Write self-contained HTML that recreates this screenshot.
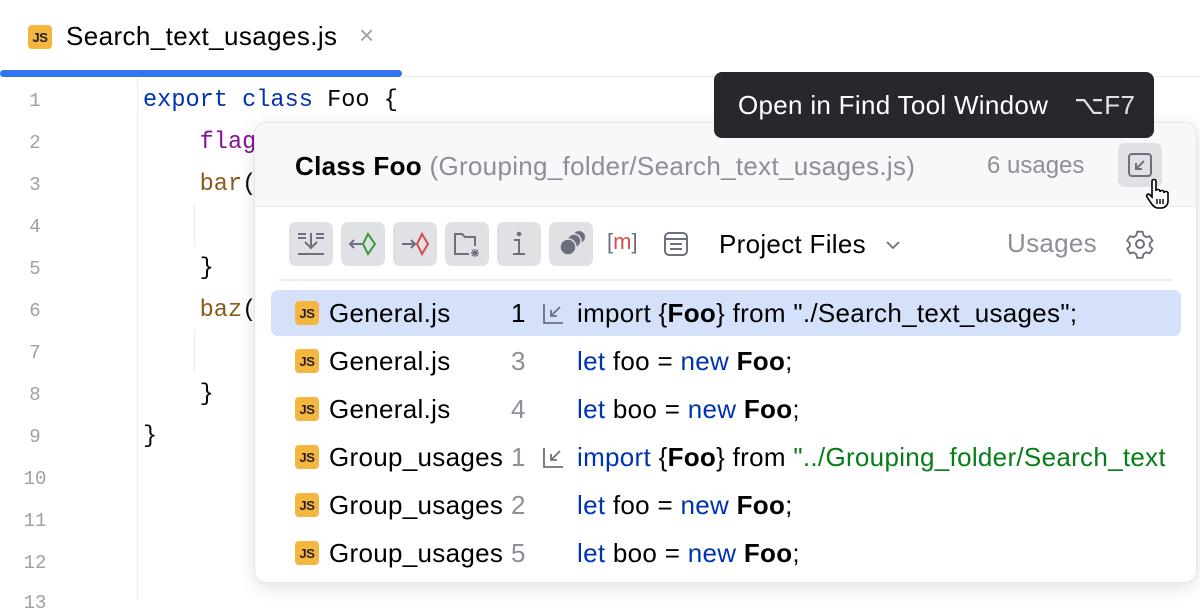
<!DOCTYPE html>
<html><head><meta charset="utf-8"><style>
*{margin:0;padding:0;box-sizing:border-box}
body{width:1200px;height:600px;overflow:hidden;background:#fff;font-family:"Liberation Sans",sans-serif;position:relative;color:#000}
.tabbar{position:absolute;left:0;top:0;width:1200px;height:77px;border-bottom:1px solid #ebecf0}
.tabul{position:absolute;left:0;top:70px;width:402px;height:7px;background:#3574f0;border-radius:4px}
.js{display:inline-block;width:24px;height:24px;background:#f4b63f;border-radius:4px;font:bold 13px "Liberation Sans",sans-serif;color:#222;text-align:center;line-height:25px;letter-spacing:-.3px}
.gutter{position:absolute;left:137px;top:77px;width:1px;height:523px;background:#ebecf0}
.ln{position:absolute;left:20px;width:30px;text-align:center;font:19px "Liberation Mono",monospace;color:#9da0a8}
.code{position:absolute;left:143px;font:23.6px "Liberation Mono",monospace;white-space:pre;color:#080808}
.kw{color:#0033b3}.fn{color:#871094}.br{color:#8a5a1a}
.pop{position:absolute;left:254px;top:122px;width:943px;height:461px;background:#fff;border:1px solid #e4e5e9;border-radius:12px;box-shadow:0 4px 18px rgba(0,0,0,.12);overflow:hidden}
.head{position:absolute;left:0;top:0;width:100%;height:84px;background:#f7f8fa;border-bottom:1px solid #ebecf0}
.tip{position:absolute;left:714px;top:72px;width:440px;height:66px;background:#27282e;border-radius:8px;color:#fff;font-size:26px;letter-spacing:.3px;line-height:66px;padding-left:24px}
.ib{position:absolute;top:99px;width:44px;height:44px;background:#dfe1e5;border-radius:7px}
.row{position:absolute;left:16px;width:910px;height:46px;font-size:26px;letter-spacing:.3px;line-height:46px;white-space:nowrap}
.row .js{position:absolute;left:24px;top:11px;letter-spacing:-.3px}
.row .f{position:absolute;left:58px}
.row .n{position:absolute;left:240px;color:#8c8f99}
.row .ic{position:absolute;left:270px;top:12px}
.row .c{position:absolute;left:306px;width:588px;overflow:hidden}
.b{font-weight:bold}.k{color:#0033b3}.s{color:#067d17}
</style></head><body>
<div class="tabbar"></div>
<div style="position:absolute;left:28px;top:25px" class="js">JS</div>
<div style="position:absolute;left:66px;top:21px;font-size:26px;letter-spacing:.4px">Search_text_usages.js</div>
<div style="position:absolute;left:359px;top:20px;font-size:26px;color:#9da0a8">×</div>
<div class="tabul"></div>
<div class="gutter"></div>
<div class="ln" style="top:90px">1</div><div class="ln" style="top:132px">2</div><div class="ln" style="top:174px">3</div><div class="ln" style="top:216px">4</div><div class="ln" style="top:258px">5</div><div class="ln" style="top:300px">6</div><div class="ln" style="top:342px">7</div><div class="ln" style="top:384px">8</div><div class="ln" style="top:426px">9</div><div class="ln" style="top:468px">10</div><div class="ln" style="top:510px">11</div><div class="ln" style="top:552px">12</div><div class="ln" style="top:592px">13</div>
<div class="code" style="top:87px"><span class="kw">export class</span> Foo {</div>
<div class="code" style="top:129px">    <span class="fn">flag</span></div>
<div class="code" style="top:171px">    <span class="br">bar</span>(</div>
<div class="code" style="top:255px">    }</div>
<div class="code" style="top:297px">    <span class="br">baz</span>(</div>
<div class="code" style="top:381px">    }</div>
<div class="code" style="top:423px">}</div>
<div style="position:absolute;left:194px;top:204px;width:1px;height:42px;background:#ebecf0"></div>
<div style="position:absolute;left:194px;top:330px;width:1px;height:42px;background:#ebecf0"></div>

<div class="pop">
<div class="head"></div>
<div style="position:absolute;left:40px;top:28px;font-size:26px;letter-spacing:.3px;white-space:nowrap"><b>Class Foo</b> <span style="color:#8c8f99">(Grouping_folder/Search_text_usages.js)</span></div>
<div style="position:absolute;left:732px;top:29px;font-size:24px;color:#8c8f99">6 usages</div>
<div style="position:absolute;left:863px;top:20px;width:44px;height:44px;background:#dfe1e5;border-radius:7px">
<svg width="44" height="44" viewBox="0 0 44 44" fill="none" stroke="#6c707e" stroke-width="2"><rect x="11" y="11" width="22" height="22" rx="3"/><path d="M26 18l-8 8M18 20v6h6"/></svg></div>
<svg style="position:absolute;left:890px;top:55px" width="30" height="32" viewBox="0 0 30 32"><path d="M7 3c0-2 4-2 4 0v10c0-2 4-2 4 0v1c0-2 4-2 4 0v1c0-2 4-2 4 0v8c0 4-3 7-7 7h-3c-3 0-5-2-7-5l-4-6c-1-2 1-4 3-2l2 2z" fill="#fff" stroke="#000" stroke-width="1.6"/><path d="M12 21v5M15 21v5M18 21v5" stroke="#000" stroke-width="1.4"/></svg>

<div class="ib" style="left:34px"><svg width="44" height="44" fill="none" stroke="#6c707e" stroke-width="2"><path d="M9 12h8M27 12h8M9 16h8M27 16h8M22 11v14M16 20l6 6 6-6M9 32h26"/></svg></div>
<div class="ib" style="left:86px"><svg width="44" height="44" fill="none" stroke-width="2"><path d="M9 22h12M13 18l-4 4 4 4" stroke="#6c707e"/><path d="M27 12l7 10-7 10-5-10z" stroke="#3e9b3e"/></svg></div>
<div class="ib" style="left:138px"><svg width="44" height="44" fill="none" stroke-width="2"><path d="M9 22h13M18 18l4 4-4 4" stroke="#6c707e"/><path d="M29 12l6 10-6 10-5-10z" stroke="#d74c4c"/></svg></div>
<div class="ib" style="left:190px"><svg width="44" height="44" fill="none" stroke="#6c707e" stroke-width="2"><path d="M30 24v-9h-10l-3-3h-7v20h14"/><path d="M30 27v8M26 31h8M27 28l6 6M33 28l-6 6" stroke-width="1.4"/></svg></div>
<div class="ib" style="left:242px"><svg width="44" height="44" fill="none" stroke="#6c707e" stroke-width="2"><circle cx="22" cy="12" r="1.3" fill="#6c707e"/><path d="M17 18h5v14M16 32h12"/></svg></div>
<div class="ib" style="left:294px"><svg width="44" height="44"><circle cx="30" cy="15" r="6" fill="#6c707e"/><circle cx="25" cy="19" r="7" fill="#6c707e" stroke="#dfe1e5" stroke-width="1.5"/><circle cx="19" cy="25" r="8" fill="#6c707e" stroke="#dfe1e5" stroke-width="1.5"/></svg></div>
<div style="position:absolute;left:352px;top:106px;font-size:22px;color:#d74c4c;white-space:nowrap"><span style="color:#6c707e">[</span>m<span style="color:#6c707e">]</span></div>
<svg style="position:absolute;left:400px;top:99px" width="44" height="44" fill="none" stroke="#6c707e" stroke-width="2"><rect x="10" y="11" width="22" height="22" rx="4"/><path d="M10 17h22M15 22h12M15 27h12"/></svg>
<div style="position:absolute;left:464px;top:106px;font-size:26px;letter-spacing:.3px;white-space:nowrap">Project Files</div>
<svg style="position:absolute;left:628px;top:112px" width="20" height="20" fill="none" stroke="#6c707e" stroke-width="1.8"><path d="M4 7l6 6 6-6"/></svg>
<div style="position:absolute;left:752px;top:105px;font-size:26px;letter-spacing:.3px;color:#8c8f99">Usages</div>
<svg style="position:absolute;left:870px;top:106px" width="30" height="30" viewBox="0 0 30 30" fill="none" stroke="#6c707e" stroke-width="2"><path d="M12 3h6l1 4 3 2 4-1 3 5-3 3v3l3 3-3 5-4-1-3 2-1 4h-6l-1-4-3-2-4 1-3-5 3-3v-3l-3-3 3-5 4 1 3-2z" transform="scale(.9) translate(1.5 0)"/><circle cx="15" cy="15" r="4"/></svg>
<div style="position:absolute;left:24px;top:156px;width:893px;height:2px;background:#ebecf0"></div>

<div class="row" style="top:167px;background:#d5e1fa;border-radius:7px"><span class="js">JS</span><span class="f">General.js</span><span class="n" style="color:#000">1</span>
<svg class="ic" width="26" height="24" fill="none" stroke="#6c707e" stroke-width="1.8"><path d="M3 2v19h19M10 14l9-9M10 8v6h6"/></svg><span class="c">import {<b>Foo</b>} from "./Search_text_usages";</span></div>
<div class="row" style="top:215px"><span class="js">JS</span><span class="f">General.js</span><span class="n">3</span><span class="c"><span class="k">let</span> foo = <span class="k">new</span> <b>Foo</b>;</span></div>
<div class="row" style="top:263px"><span class="js">JS</span><span class="f">General.js</span><span class="n">4</span><span class="c"><span class="k">let</span> boo = <span class="k">new</span> <b>Foo</b>;</span></div>
<div class="row" style="top:311px"><span class="js">JS</span><span class="f">Group_usages</span><span class="n">1</span>
<svg class="ic" width="26" height="24" fill="none" stroke="#6c707e" stroke-width="1.8"><path d="M3 2v19h19M10 14l9-9M10 8v6h6"/></svg><span class="c"><span class="k">import</span> {<b>Foo</b>} from <span class="s">"../Grouping_folder/Search_text_usages"</span></span></div>
<div class="row" style="top:359px"><span class="js">JS</span><span class="f">Group_usages</span><span class="n">2</span><span class="c"><span class="k">let</span> foo = <span class="k">new</span> <b>Foo</b>;</span></div>
<div class="row" style="top:407px"><span class="js">JS</span><span class="f">Group_usages</span><span class="n">5</span><span class="c"><span class="k">let</span> boo = <span class="k">new</span> <b>Foo</b>;</span></div>
</div>
<div class="tip">Open in Find Tool Window <span style="position:absolute;left:360px;color:#dfe1e5">⌥F7</span></div>
</body></html>
